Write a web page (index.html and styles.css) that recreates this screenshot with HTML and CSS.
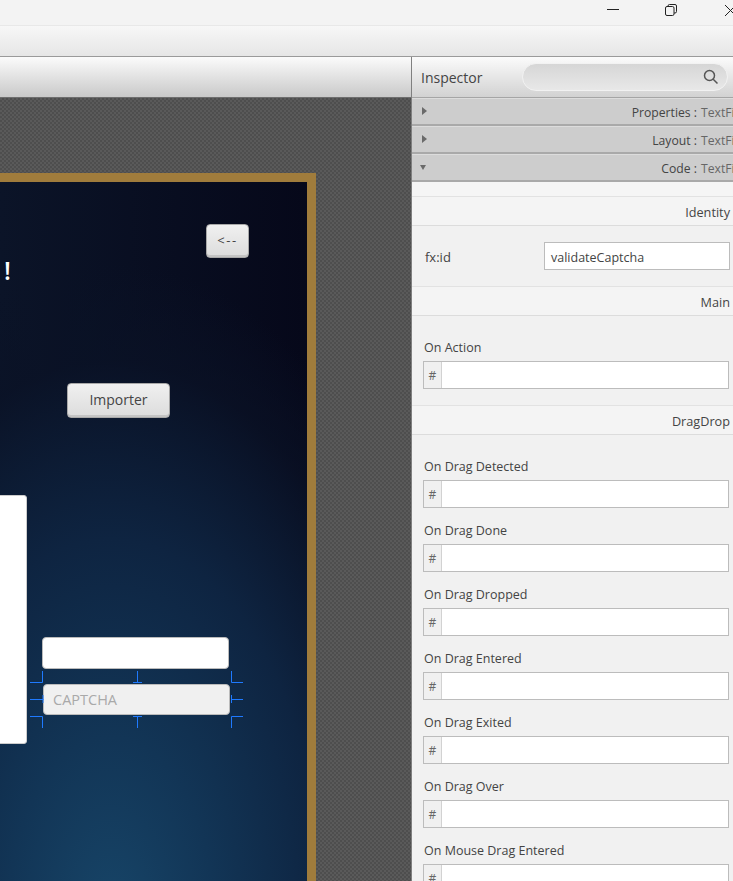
FILE: index.html
```html
<!DOCTYPE html>
<html lang="en">
  <head>
    <meta charset="UTF-8" />
    <title>Scene Builder</title>
    <link rel="stylesheet" href="styles.css">
  </head>
  <body>
    <div id="titlebar">
      <svg class="winbtn min" width="12" height="12" viewBox="0 0 12 12"><path d="M0 6.500H12" /></svg>
      <svg class="winbtn restore" width="12" height="12" viewBox="0 0 12 12"><rect x="0.500" y="2.500" width="8.500" height="9" rx="1.500" /><path d="M3 2.500V2A1.500 1.500 0 0 1 4.500 .5H10A1.500 1.500 0 0 1 11.500 2V7.500A1.500 1.500 0 0 1 10 9H9" /></svg>
      <svg class="winbtn close" width="13" height="13" viewBox="0 0 13 13"><path d="M1 1L12 12M12 1L1 12" /></svg>
    </div>
    <div id="toolbar"></div>
    <div id="main">
      <div id="content">
        <div id="contentHeader"></div>
        <div id="canvas">
          <div id="artboard">
            <span id="bang">!</span>
            <button id="back">&lt;--</button>
            <button id="importer">Importer</button>
            <div id="whiteBox"></div>
            <div id="blankField"></div>
            <div id="captcha">CAPTCHA</div>
            <!-- selection handles -->
            <svg id="handles" width="214" height="57" viewBox="0 0 214 57">
              <path d="M12.500 0V11.500H0M107.500 0V11.500M103 11.500H112M201.500 0V11.500H213M0 28.500H13.500M201 28.500H213M0 45.500H12.500V57M107.500 45.500V57M103 45.500H112M213 45.500H201.500V57M13 24V32M201.500 24V32" />
            </svg>
          </div>
        </div>
      </div>
      <div id="inspector">
        <div id="inspectorHeader">
          <span class="inspectorTitle">Inspector</span>
          <div id="search">
            <svg width="16" height="16" viewBox="0 0 16 16"><circle cx="6.500" cy="6.500" r="5" /><path d="M10.200 10.200L14.500 14.500" /></svg>
          </div>
        </div>
        <div class="pane"><i class="arrow"></i><div class="paneTitle"><b>Properties :</b><span>TextField</span></div></div>
        <div class="pane"><i class="arrow"></i><div class="paneTitle"><b>Layout :</b><span>TextField</span></div></div>
        <div class="pane"><i class="arrow open"></i><div class="paneTitle"><b>Code :</b><span>TextField</span></div></div>
        <div class="spacer"></div>
        <div class="section">Identity</div>
        <div class="fxRow">
          <span>fx:id</span>
          <div class="fxInput">validateCaptcha</div>
        </div>
        <div class="section">Main</div>
        <div class="group">
          <div class="prop"><label>On Action</label><div class="field"><span>#</span><div></div></div></div>
        </div>
        <div class="section">DragDrop</div>
        <div class="group">
          <div class="prop"><label>On Drag Detected</label><div class="field"><span>#</span><div></div></div></div>
          <div class="prop"><label>On Drag Done</label><div class="field"><span>#</span><div></div></div></div>
          <div class="prop"><label>On Drag Dropped</label><div class="field"><span>#</span><div></div></div></div>
          <div class="prop"><label>On Drag Entered</label><div class="field"><span>#</span><div></div></div></div>
          <div class="prop"><label>On Drag Exited</label><div class="field"><span>#</span><div></div></div></div>
          <div class="prop"><label>On Drag Over</label><div class="field"><span>#</span><div></div></div></div>
          <div class="prop"><label>On Mouse Drag Entered</label><div class="field"><span>#</span><div></div></div></div>
        </div>
      </div>
    </div>
  </body>
</html>
```

FILE: styles.css
```css
html,
body {
  margin: 0;
  padding: 0;
  height: 881px;
  overflow: hidden;
}
body {
  width: 733px;
  background-color: #f1f1f1;
  font-family: "Open Sans", "Noto Sans", sans-serif;
  color: #444;
}
#titlebar {
  position: relative;
  height: 25px;
  background-color: #f3f3f3;
  border-bottom: 1px solid #e8e8e8;
}
.winbtn {
  position: absolute;
  fill: none;
  stroke: #222;
  stroke-width: 1;
}
.min {
  left: 607px;
  top: 3px;
}
.restore {
  left: 665px;
  top: 4px;
}
.close {
  left: 724px;
  top: 4px;
}
#toolbar {
  height: 30px;
  background: linear-gradient(#f7f7f7, #e6e6e6);
  border-bottom: 1px solid #9a9a9a;
}
#main {
  display: flex;
  height: 824px;
}
#content {
  width: 411px;
  flex: none;
  display: flex;
  flex-direction: column;
  border-right: 1px solid #808080;
}
#contentHeader {
  height: 40px;
  flex: none;
  background: linear-gradient(#fbfbfb, #c9c9c9);
  border-bottom: 1px solid #6e6e6e;
}
#canvas {
  position: relative;
  flex: 1;
  overflow: hidden;
  background-color: #545454;
  background-image: conic-gradient(#4e4e4e 25%, #5a5a5a 0 50%, #4e4e4e 0 75%, #5a5a5a 0);
  background-size: 4px 4px;
}
#artboard {
  position: absolute;
  left: -308px;
  top: 75px;
  width: 606px;
  height: 800px;
  border: 9px solid #a07c3c;
  background:
    radial-gradient(ellipse 370px 660px at 410px 740px, #174568 0%, #123556 28%, #0e2441 58%, rgba(10, 18, 38, 0.7) 85%, rgba(10, 18, 38, 0) 100%),
    linear-gradient(to right, #0b1428 299px, #06081a 606px);
}
#bang {
  position: absolute;
  left: 303px;
  top: 72px;
  font-size: 25px;
  font-weight: 600;
  line-height: 32px;
  color: #fff;
}
#back,
#importer {
  position: absolute;
  margin: 0;
  padding: 0 0 3px;
  border: 1px solid #a8a8a8;
  border-radius: 4px;
  background: linear-gradient(#f0f0f0, #dcdcdc);
  box-shadow: inset 0 -2px 0 #c4c4c4;
  font-family: "Open Sans", "Noto Sans", sans-serif;
  color: #444;
}
#back {
  left: 505px;
  top: 42px;
  width: 43px;
  height: 34px;
  font-size: 13px;
  letter-spacing: 1.500px;
}
#importer {
  left: 366px;
  top: 201px;
  width: 103px;
  height: 35px;
  font-size: 14px;
}
#whiteBox {
  position: absolute;
  left: 200px;
  top: 313px;
  width: 126px;
  height: 249px;
  background-color: #fff;
  border-radius: 3px;
  border: 1px solid #ccc;
  box-sizing: border-box;
}
#blankField,
#captcha {
  position: absolute;
  box-sizing: border-box;
  border: 1px solid #bbb;
  border-radius: 4px;
}
#blankField {
  left: 341px;
  top: 455px;
  width: 187px;
  height: 32px;
  background-color: #fff;
}
#captcha {
  left: 342px;
  top: 502px;
  width: 187px;
  height: 31px;
  padding-left: 9px;
  background-color: #f0f0f0;
  font-size: 14.500px;
  line-height: 30px;
  color: #a9a9a9;
}
#handles {
  position: absolute;
  left: 329px;
  top: 489px;
  fill: none;
  stroke: #1f7aff;
  stroke-width: 1;
}
#inspector {
  flex: 1;
  min-width: 0;
  overflow: hidden;
}
#inspectorHeader {
  display: flex;
  align-items: center;
  height: 40px;
  padding: 0 5px 0 9px;
  background: linear-gradient(#fbfbfb, #d2d2d2);
  border-bottom: 1px solid #a5a5a5;
}
.inspectorTitle {
  font-size: 14px;
  color: #444;
  width: 101px;
  flex: none;
}
#search {
  flex: 1;
  height: 26px;
  display: flex;
  align-items: center;
  justify-content: flex-end;
  padding-right: 8px;
  border: 1px solid #f2f2f2;
  border-radius: 14px;
  background: linear-gradient(#d6d6d6, #e8e8e8);
}
#search svg {
  fill: none;
  stroke: #555;
  stroke-width: 1.500;
}
.pane {
  position: relative;
  height: 25px;
  border-top: 1px solid #dcdcdc;
  border-bottom: 2px solid #a9a9a9;
  background-color: #cdcdcd;
}
.paneTitle {
  display: flex;
  gap: 4px;
  white-space: nowrap;
  font-size: 12.200px;
  line-height: 27px;
  color: #666;
}
.paneTitle b {
  width: 285px;
  flex: none;
  text-align: right;
  font-weight: normal;
  color: #444;
}
.arrow {
  position: absolute;
  left: 10px;
  top: 8px;
  border-left: 5px solid #6a6a6a;
  border-top: 4px solid transparent;
  border-bottom: 4px solid transparent;
}
.arrow.open {
  left: 8px;
  top: 10px;
  border-top: 5px solid #6a6a6a;
  border-bottom: 0;
  border-left: 3.500px solid transparent;
  border-right: 3.500px solid transparent;
}
.spacer {
  height: 14px;
  background-color: #f5f5f5;
}
.section {
  height: 28px;
  padding-right: 3px;
  border-top: 1px solid #e2e2e2;
  border-bottom: 1px solid #dcdcdc;
  background-color: #f4f4f4;
  text-align: right;
  font-size: 12.700px;
  line-height: 30px;
}
.fxRow {
  display: flex;
  align-items: center;
  justify-content: space-between;
  height: 60px;
  padding: 0 3px 0 13px;
  font-size: 13px;
}
.fxRow > span {
  padding-top: 2px;
}
.fxInput {
  box-sizing: border-box;
  width: 186px;
  height: 28px;
  padding-left: 6px;
  border: 1px solid #bcbcbc;
  background-color: #fff;
  line-height: 29px;
  font-size: 12.500px;
}
.group {
  display: flex;
  flex-direction: column;
  gap: 13px;
  padding: 22px 4px 16px 11px;
}
.prop label {
  display: block;
  height: 23px;
  padding-left: 1px;
  font-size: 12.500px;
  line-height: 20px;
}
.field {
  display: flex;
  box-sizing: border-box;
  height: 28px;
  border: 1px solid #bcbcbc;
  background-color: #fff;
}
.field span {
  width: 17px;
  flex: none;
  border-right: 1px solid #d2d2d2;
  background-color: #f0f0f0;
  text-align: center;
  font-size: 12px;
  line-height: 28px;
  color: #666;
}
```
